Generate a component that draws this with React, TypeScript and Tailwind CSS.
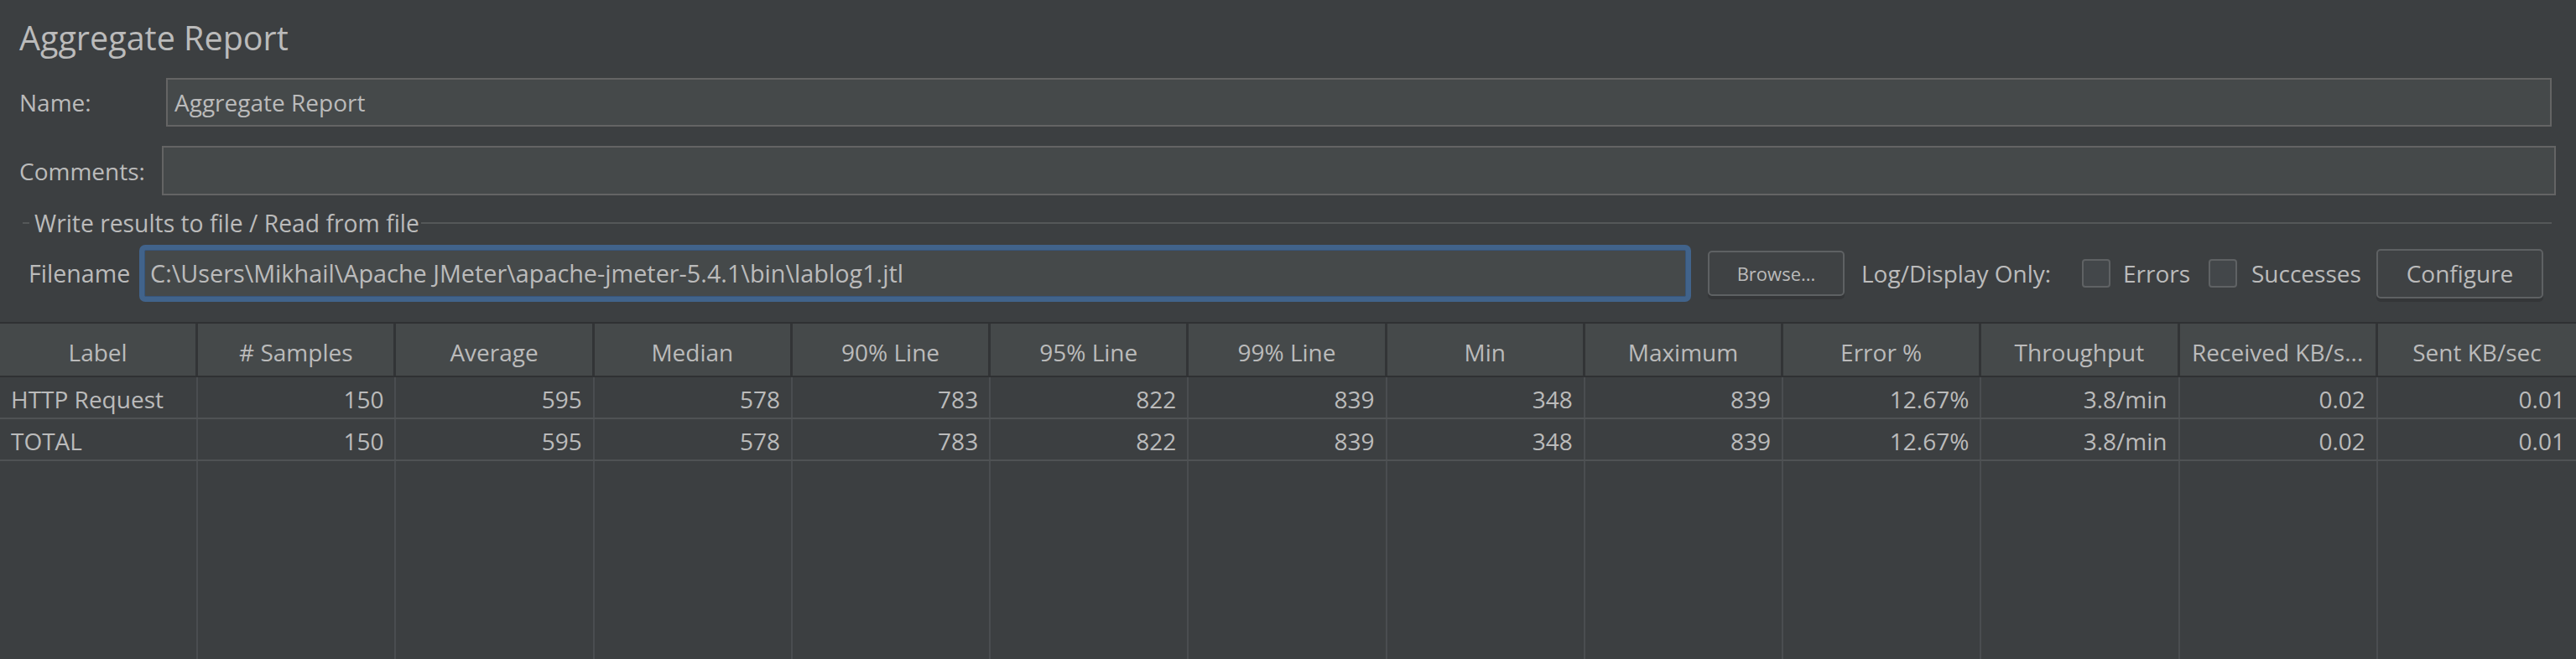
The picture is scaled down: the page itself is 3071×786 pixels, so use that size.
import React from "react";

const headers = [
  "Label",
  "# Samples",
  "Average",
  "Median",
  "90% Line",
  "95% Line",
  "99% Line",
  "Min",
  "Maximum",
  "Error %",
  "Throughput",
  "Received KB/s...",
  "Sent KB/sec",
];

const rows = [
  ["HTTP Request", "150", "595", "578", "783", "822", "839", "348", "839", "12.67%", "3.8/min", "0.02", "0.01"],
  ["TOTAL", "150", "595", "578", "783", "822", "839", "348", "839", "12.67%", "3.8/min", "0.02", "0.01"],
];

function Checkbox() {
  return <div className="w-[34px] h-[34px] rounded-[4px] border-2 border-[#5f6264] bg-[#43474a] shrink-0" />;
}

export default function App() {
  return (
    <div
      className="w-[3071px] h-[786px] overflow-hidden bg-[#3c3f41] text-[#bbbbbb] flex flex-col"
      style={{ fontFamily: '"Open Sans", "Noto Sans", sans-serif' }}
    >
      {/* Title */}
      <div className="pl-[23px] pt-[26px] h-[64px] text-[39.5px] leading-none whitespace-nowrap">Aggregate Report</div>

      {/* Name */}
      <div className="mt-[29px] flex items-center h-[58px] mr-[29px]">
        <div className="w-[198px] pl-[23px] text-[28px] leading-none shrink-0">Name:</div>
        <div className="flex-1 h-full bg-[#45494a] border-2 border-[#646464] flex items-center pl-[8px] text-[28px] leading-none">
          Aggregate Report
        </div>
      </div>

      {/* Comments */}
      <div className="mt-[23px] flex items-center h-[59px] mr-[24px]">
        <div className="w-[193px] pl-[23px] text-[28px] leading-none shrink-0">Comments:</div>
        <div className="flex-1 h-full bg-[#45494a] border-2 border-[#646464]" />
      </div>

      {/* Group title */}
      <div className="mt-[19px] flex items-center mr-[29px]">
        <div className="ml-[27px] w-[8px] h-[2px] bg-[#555758]" />
        <div className="ml-[6px] mr-[2px] text-[28.3px] leading-none whitespace-nowrap">
          Write results to file / Read from file
        </div>
        <div className="flex-1 h-[2px] bg-[#555758]" />
      </div>

      {/* Filename row */}
      <div className="mt-[12px] flex items-center h-[68px] mr-[39px] text-[28px] leading-none">
        <div className="ml-[34px] w-[132px] shrink-0 whitespace-nowrap text-[28.6px]">Filename</div>
        <div className="flex-1 h-full rounded-[7px] bg-[#41638b] p-[6px]">
          <div className="w-full h-full bg-[#45494a] border border-[#37557a] rounded-[2px] flex items-center pl-[6px] whitespace-nowrap text-[28.8px]">
            C:\Users\Mikhail\Apache JMeter\apache-jmeter-5.4.1\bin\lablog1.jtl
          </div>
        </div>
        <div className="ml-[20px] w-[163px] h-[54px] rounded-[5px] border-2 border-[#5e6163] bg-[#3f4244] shadow-[0_4px_0_#343638] flex items-center justify-center text-[22px] shrink-0">
          Browse...
        </div>
        <div className="ml-[20px] w-[233px] whitespace-nowrap shrink-0">Log/Display Only:</div>
        <div className="ml-[30px]">
          <Checkbox />
        </div>
        <div className="ml-[15px] w-[74px] whitespace-nowrap shrink-0">Errors</div>
        <div className="ml-[28px]">
          <Checkbox />
        </div>
        <div className="ml-[17px] w-[130px] whitespace-nowrap shrink-0">Successes</div>
        <div className="ml-[19px] w-[199px] h-[59px] rounded-[5px] border-2 border-[#5e6163] bg-[#3f4244] shadow-[0_4px_0_#343638] flex items-center justify-center shrink-0">
          Configure
        </div>
      </div>

      {/* Table */}
      <div className="mt-[24px] flex-1 flex flex-col border-t-2 border-[#2f3133] text-[28px] leading-none">
        <div className="grid grid-cols-[repeat(13,minmax(0,1fr))] h-[64px] bg-[#45494a] border-b-2 border-[#2f3133]">
          {headers.map((h, i) => (
            <div
              key={i}
              className={`flex items-center justify-center pt-[5px] whitespace-nowrap ${i < 12 ? "border-r-[3px] border-[#323436]" : ""}`}
            >
              {h}
            </div>
          ))}
        </div>
        {rows.map((r, ri) => (
          <div key={ri} className="grid grid-cols-[repeat(13,minmax(0,1fr))] h-[50px] border-b-2 border-[#4f5254]">
            {r.map((c, ci) => (
              <div
                key={ci}
                className={`flex items-center pt-[3px] whitespace-nowrap ${ci === 0 ? "justify-start pl-[13px]" : "justify-end pr-[13px]"} ${ci < 12 ? "border-r-2 border-[#4a4d50]" : ""}`}
              >
                {c}
              </div>
            ))}
          </div>
        ))}
        <div className="flex-1 grid grid-cols-[repeat(13,minmax(0,1fr))]">
          {headers.map((_, i) => (
            <div key={i} className={i < 12 ? "border-r-2 border-[#4a4d50]" : ""} />
          ))}
        </div>
      </div>
    </div>
  );
}
